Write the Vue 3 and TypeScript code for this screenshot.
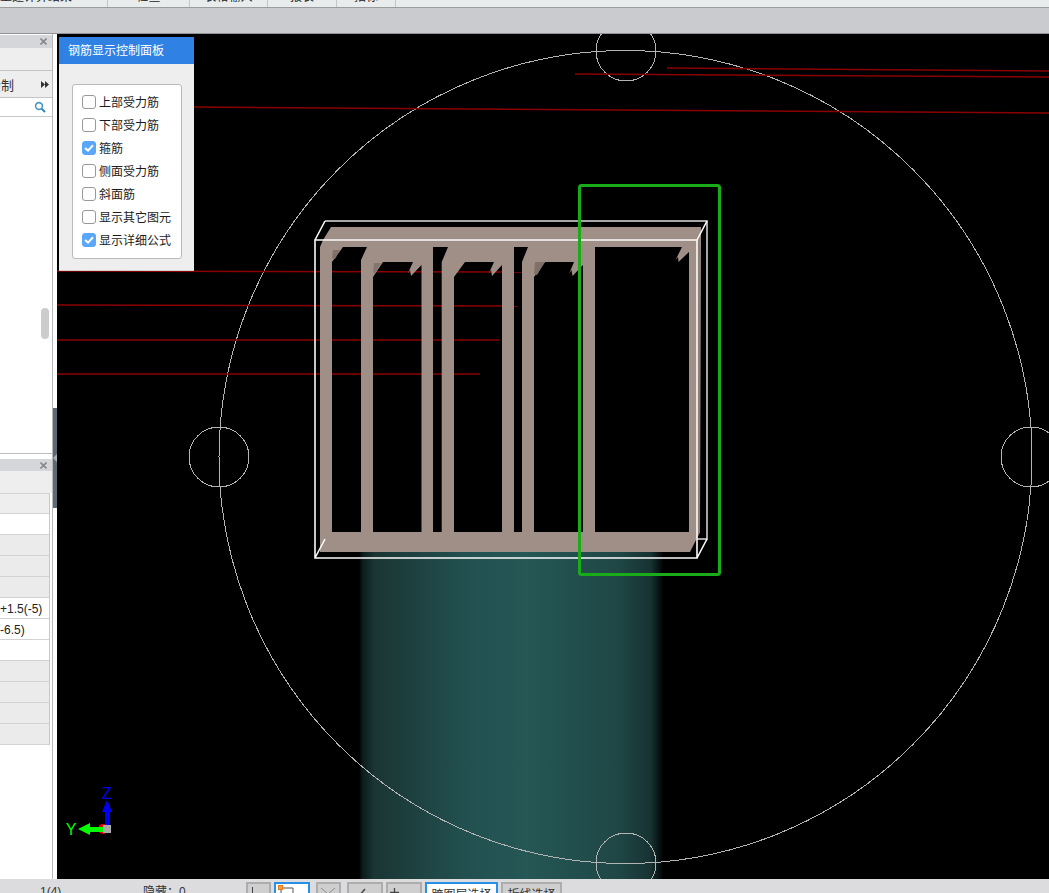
<script setup lang="ts">
const menus = [
  { label: '土建计算结果', width: 108, first: true },
  { label: '检查', width: 82 },
  { label: '表格输入', width: 78 },
  { label: '报表', width: 69 },
  { label: '指标', width: 59 },
]

const rows = [
  { text: '', tone: 'head' },
  { text: '', tone: 'plain' },
  { text: '', tone: 'grey' },
  { text: '', tone: 'grey' },
  { text: '', tone: 'grey' },
  { text: '+1.5(-5)', tone: 'plain' },
  { text: '-6.5)', tone: 'plain' },
  { text: '', tone: 'plain' },
  { text: '', tone: 'grey' },
  { text: '', tone: 'grey' },
  { text: '', tone: 'grey' },
  { text: '', tone: 'grey' },
]

const options = [
  { label: '上部受力筋', checked: false },
  { label: '下部受力筋', checked: false },
  { label: '箍筋', checked: true },
  { label: '侧面受力筋', checked: false },
  { label: '斜面筋', checked: false },
  { label: '显示其它图元', checked: false },
  { label: '显示详细公式', checked: true },
]

const circles = [
  { cx: 626, cy: 51 },
  { cx: 219, cy: 457 },
  { cx: 1031, cy: 457 },
  { cx: 626, cy: 863 },
]

// rebar cage: outer outline followed by the openings between the stirrup legs
const cagePath = [
  'M331,227 L701,227 L700,532 L690,552 L320,552 L320,247 L323,240 Z',
  'M332,532 L332,262 L343,247 L367,247 L361,260 L361,532 Z',
  'M373,532 L373,277 L383,262 L413,262 L407.5,274 L410,270 L411,276 L421.5,265 L421.5,532 Z',
  'M433,532 L433,247 L448,247 L441.7,262 L441.7,532 Z',
  'M454,532 L454,277 L465,262 L494,262 L488.5,274 L491,270 L492,276 L502,265 L502,532 Z',
  'M514,532 L514,247 L528,247 L522,262 L522,532 Z',
  'M534,532 L534,277 L545,262 L574,262 L569,274 L571.5,270 L572.5,276 L583,265 L583,532 Z',
  'M595,532 L595,247 L682,247 L675.5,260 L678,257 L678.5,262 L689,252 L689,532 Z',
].join(' ')
</script>

<template>
  <div class="app">
    <div class="menu-bar">
      <div
        v-for="m in menus"
        :key="m.label"
        class="menu-item"
        :class="{ first: m.first }"
        :style="{ width: m.width + 'px' }"
      >
        <span>{{ m.label }}</span>
      </div>
    </div>
    <div class="tool-bar"></div>

    <div class="main">
      <aside class="side">
        <section class="side-top">
          <div class="dock-head">
            <svg class="close" width="7" height="7" viewBox="0 0 7 7">
              <path d="M0.5 0.5 L6.5 6.5 M6.5 0.5 L0.5 6.5" stroke="#85888c" stroke-width="1.6" />
            </svg>
          </div>
          <div class="dock-blank"></div>
          <div class="dock-row">
            <span class="clip-text">绘制</span>
            <svg width="8" height="7" viewBox="0 0 8 7">
              <path d="M0 0 L4 3.5 L0 7 Z M4 0 L8 3.5 L4 7 Z" fill="#333" />
            </svg>
          </div>
          <div class="search">
            <svg width="12" height="12" viewBox="0 0 12 12">
              <circle cx="5" cy="5" r="3.4" fill="none" stroke="#4a98c4" stroke-width="1.6" />
              <path d="M7.6 7.6 L11 11" stroke="#2f84b8" stroke-width="2" />
            </svg>
          </div>
          <div class="tree">
            <div class="thumb"></div>
          </div>
        </section>
        <div class="side-gap"></div>
        <section class="side-bottom">
          <div class="dock-head">
            <svg class="close" width="7" height="7" viewBox="0 0 7 7">
              <path d="M0.5 0.5 L6.5 6.5 M6.5 0.5 L0.5 6.5" stroke="#85888c" stroke-width="1.6" />
            </svg>
          </div>
          <div class="prop-blank"></div>
          <div class="prop-table">
            <div v-for="(r, i) in rows" :key="i" class="prop-row" :class="r.tone">{{ r.text }}</div>
          </div>
        </section>
      </aside>

      <div class="splitter">
        <div class="grip">
          <svg width="4" height="8" viewBox="0 0 4 8">
            <path d="M4 0 L0 4 L4 8 Z" fill="#a9b1b8" />
          </svg>
        </div>
      </div>

      <div class="viewport">
        <svg class="scene" viewBox="57 34 992 845" width="992" height="845">
          <defs>
            <linearGradient id="column" x1="0" x2="1" y1="0" y2="0">
              <stop offset="0" stop-color="#000" />
              <stop offset="0.012" stop-color="#0c1c1c" />
              <stop offset="0.05" stop-color="#1a3534" />
              <stop offset="0.35" stop-color="#225050" />
              <stop offset="0.55" stop-color="#255755" />
              <stop offset="0.85" stop-color="#1f4746" />
              <stop offset="0.96" stop-color="#173232" />
              <stop offset="0.995" stop-color="#040a0a" />
              <stop offset="1" stop-color="#000" />
            </linearGradient>
          </defs>

          <rect x="359" y="552" width="304" height="327" fill="url(#column)" />

          <g fill="none" stroke="#b4b4b4" shape-rendering="crispEdges">
            <circle cx="625.5" cy="457" r="406.5" />
            <circle v-for="c in circles" :key="c.cx + '-' + c.cy" :cx="c.cx" :cy="c.cy" r="30" />
          </g>

          <g stroke="#8a0000" stroke-width="1.5" fill="none">
            <path d="M667 68 L1049 71" />
            <path d="M575 74 L1049 77" />
            <path d="M194 107 L1049 113" />
            <path d="M57 271 L524 272" />
            <path d="M57 305 L518 306" />
            <path d="M57 340 L499 340" />
            <path d="M57 374 L480 374" />
          </g>

          <!-- back of the bounding box -->
          <path d="M325 221 H707 V539 H697" fill="none" stroke="#dcdcdc" stroke-width="1.5" />

          <path :d="cagePath" fill="#a08f87" fill-rule="evenodd" />
          <path d="M697 240 L700 232 L700 532 L697 538 Z" fill="#8f8079" />
          <path d="M333 250 L340 250 L335 259 L332 258 Z" fill="#7f716a" />
          <path d="M374 263 L381 263 L375 274 L373 272 Z" fill="#84766f" />
          <path d="M535 262 L545 262 L537 275 L534 274 Z" fill="#7f716a" />

          <!-- front of the bounding box -->
          <path
            d="M315 240 H697 V558 H315 Z M315 240 L325 221 M697 240 L707 221 M315 558 L325 539 M697 558 L707 539"
            fill="none"
            stroke="#fafafa"
            stroke-width="1.6"
          />

          <rect x="579.5" y="185.5" width="140" height="389" rx="2" fill="none" stroke="#18ad18" stroke-width="3" />

          <!-- axis gizmo -->
          <circle cx="103" cy="829" r="5" fill="#f00000" />
          <path d="M105 825 V812 H102 L107 800 L112 812 H110 V825 Z" fill="#0000f0" />
          <path d="M104 827 H90 V823 L78 829 L90 835 V832 H104 Z" fill="#00ff00" />
          <rect x="103" y="825" width="8" height="8" fill="#aaaaaa" />
          <text x="107" y="799" class="axis z">Z</text>
          <text x="71" y="835" class="axis y">Y</text>
        </svg>

        <div class="panel">
          <div class="panel-title">钢筋显示控制面板</div>
          <div class="panel-body">
            <div class="option-box">
              <label v-for="o in options" :key="o.label" class="option">
                <span class="check" :class="{ on: o.checked }">
                  <svg v-if="o.checked" width="10" height="8" viewBox="0 0 10 8">
                    <path d="M1 4 L4 6.6 L9 1.2" fill="none" stroke="#fff" stroke-width="2" />
                  </svg>
                </span>
                <span>{{ o.label }}</span>
              </label>
            </div>
          </div>
        </div>
      </div>
    </div>

    <footer class="status">
      <span class="status-text page">1(4)</span>
      <span class="status-text hidden-count">隐藏：0</span>
      <div class="status-tools">
        <button class="tool w25 icon-stem"><i class="stem"></i></button>
        <button class="tool w36 active icon-flag">
          <svg width="16" height="10" viewBox="0 0 16 10">
            <path d="M3 3 V10 M3 3 H15 V10" fill="none" stroke="#555" />
            <rect x="0.5" y="0.5" width="4" height="4" fill="#f5a04a" stroke="#e57a1a" />
          </svg>
        </button>
        <button class="tool w25 spaced icon-vee">
          <svg width="14" height="8" viewBox="0 0 14 8">
            <path d="M0 1 L7 7 L14 1" fill="none" stroke="#8c8c8c" />
          </svg>
        </button>
        <button class="tool w36 spaced icon-tick">
          <svg width="8" height="8" viewBox="0 0 8 8">
            <path d="M1 8 L7 1" fill="none" stroke="#444" stroke-width="1.4" />
          </svg>
        </button>
        <button class="tool w36 icon-plus">
          <svg width="9" height="9" viewBox="0 0 9 9">
            <path d="M4.5 0 V9 M0 4.5 H9" fill="none" stroke="#444" stroke-width="1.3" />
          </svg>
        </button>
        <button class="tool label active w73">跨图层选择</button>
        <button class="tool label w61">折线选择</button>
      </div>
    </footer>
  </div>
</template>

<style scoped>
.app {
  width: 1049px;
  height: 893px;
  display: flex;
  flex-direction: column;
  overflow: hidden;
  font-family: "Liberation Sans", "Noto Sans CJK SC", sans-serif;
  font-size: 12px;
  color: #222;
}

.menu-bar {
  height: 8px;
  flex: none;
  display: flex;
  background: #e9ecec;
  border-bottom: 1px solid #9a9c9e;
  box-sizing: border-box;
  overflow: hidden;
}
.menu-item {
  height: 7px;
  flex: none;
  box-sizing: border-box;
  border-right: 1px solid #c4c6c8;
  text-align: center;
  line-height: 7px;
  white-space: nowrap;
  overflow: hidden;
}
.menu-item span {
  position: relative;
  top: -6px;
}
.menu-item.first {
  text-align: right;
  padding-right: 60px;
}

.tool-bar {
  height: 26px;
  flex: none;
  box-sizing: border-box;
  background: #c9cbcf;
  border-bottom: 1px solid #8f9296;
}

.main {
  flex: 1;
  min-height: 0;
  display: flex;
}

.side {
  width: 53px;
  flex: none;
  display: flex;
  flex-direction: column;
  background: #fff;
  border-right: 1px solid #b9b9b9;
  box-sizing: border-box;
}
.side-top {
  height: 420px;
  flex: none;
  display: flex;
  flex-direction: column;
  border-bottom: 1px solid #bcbcbc;
  box-sizing: border-box;
}
.side-gap {
  height: 5px;
  flex: none;
}
.side-bottom {
  flex: 1;
  display: flex;
  flex-direction: column;
}
.dock-head {
  height: 13px;
  flex: none;
  margin-top: 1px;
  background: #d5d6d9;
  position: relative;
}
.side-bottom .dock-head {
  margin-top: 0;
  height: 12px;
}
.close {
  position: absolute;
  right: 5px;
  top: 3px;
}
.dock-blank {
  height: 23px;
  flex: none;
  background: #eeeeee;
  border-bottom: 1px solid #c2c4c6;
  box-sizing: border-box;
}
.dock-row {
  height: 27px;
  flex: none;
  box-sizing: border-box;
  background: #eeeeee;
  border-bottom: 1px solid #c2c4c6;
  display: flex;
  align-items: center;
  justify-content: space-between;
  padding-right: 3px;
  overflow: hidden;
}
.clip-text {
  margin-left: -12px;
  font-size: 13px;
  color: #333;
}
.search {
  height: 19px;
  flex: none;
  box-sizing: border-box;
  border-bottom: 1px solid #c6c8ca;
  display: flex;
  align-items: center;
  justify-content: flex-end;
  padding-right: 6px;
}
.tree {
  flex: 1;
  position: relative;
}
.thumb {
  position: absolute;
  left: 41px;
  top: 191px;
  width: 8px;
  height: 31px;
  border-radius: 4px;
  background: #cccccc;
}

.prop-blank {
  height: 22px;
  flex: none;
  background: #eeeeee;
}
.prop-table {
  width: 50px;
  flex: none;
  border-right: 1px solid #c8c8c8;
  box-sizing: border-box;
}
.prop-row {
  height: 21px;
  box-sizing: border-box;
  border-bottom: 1px solid #d2d2d2;
  line-height: 23px;
  white-space: nowrap;
  color: #222;
}
.prop-row.head {
  background: #eeeeee;
  border-top: 1px solid #d2d2d2;
}
.prop-row.grey {
  background: #ebebeb;
}
.prop-row.plain {
  background: #fff;
}

.splitter {
  width: 4px;
  flex: none;
  background: #fff;
  position: relative;
}
.grip {
  position: absolute;
  left: 0;
  top: 374px;
  width: 4px;
  height: 100px;
  background: #5d6a76;
  display: flex;
  align-items: center;
}
.grip svg {
  display: block;
}

.viewport {
  flex: 1;
  min-width: 0;
  position: relative;
  background: #000;
  overflow: hidden;
}
.scene {
  display: block;
}
.axis {
  font-family: "Liberation Sans", sans-serif;
  font-size: 16px;
  text-anchor: middle;
}
.axis.z {
  fill: #0000f0;
}
.axis.y {
  fill: #00ff00;
}

.panel {
  position: absolute;
  left: 2px;
  top: 3px;
  width: 135px;
  height: 234px;
  background: #eeeeee;
  border-bottom: 1px solid #d0d0d0;
  box-sizing: border-box;
  display: flex;
  flex-direction: column;
}
.panel-title {
  height: 27px;
  flex: none;
  background: #2f82e4;
  color: #fff;
  padding-left: 9px;
  line-height: 29px;
  font-size: 12px;
}
.panel-body {
  flex: 1;
  padding: 20px 12px 12px 13px;
}
.option-box {
  height: 175px;
  box-sizing: border-box;
  background: #fff;
  border: 1px solid #bbbbbb;
  border-radius: 3px;
  padding: 5px 0 0 9px;
  display: flex;
  flex-direction: column;
}
.option {
  height: 23px;
  flex: none;
  display: flex;
  align-items: center;
  gap: 3px;
  font-size: 12px;
  color: #1c1c1c;
}
.check {
  width: 14px;
  height: 14px;
  box-sizing: border-box;
  border: 1px solid #999;
  border-radius: 3px;
  background: #fff;
  display: flex;
  align-items: center;
  justify-content: center;
}
.check.on {
  background: #5aa7fa;
  border-color: #5aa7fa;
}

.status {
  height: 14px;
  flex: none;
  background: #dcdcde;
  display: flex;
  position: relative;
  overflow: hidden;
}
.status-text {
  position: absolute;
  top: 6px;
  line-height: 14px;
  color: #333;
}
.page {
  left: 40px;
}
.hidden-count {
  left: 143px;
}
.status-tools {
  margin: 3px 0 0 246px;
  display: flex;
  gap: 3px;
  height: 22px;
}
.tool {
  height: 22px;
  flex: none;
  box-sizing: border-box;
  padding: 0;
  background: #cfcfcf;
  border: 2px solid #adadad;
  font-family: inherit;
  font-size: 12px;
  color: #333;
  display: flex;
  align-items: flex-start;
  justify-content: flex-start;
}
.tool svg {
  display: block;
}
.tool.active {
  background: #fff;
  border-color: #2a8fe8;
}
.tool.label {
  justify-content: center;
  padding-top: 1px;
}
.w25 { width: 25px; }
.w36 { width: 36px; }
.w61 { width: 61px; }
.w73 { width: 73px; }
.spaced { margin-left: 3px; }
.icon-stem { padding: 3px 0 0 4px; }
.icon-flag { padding: 1px 0 0 2px; }
.icon-vee { padding: 3px 0 0 3px; }
.icon-tick { padding: 4px 0 0 9px; }
.icon-plus { padding: 4px 0 0 2px; }
.stem {
  display: block;
  width: 1px;
  height: 10px;
  background: #444;
}
</style>

<style>
html,
body {
  margin: 0;
  background: #fff;
}
</style>
